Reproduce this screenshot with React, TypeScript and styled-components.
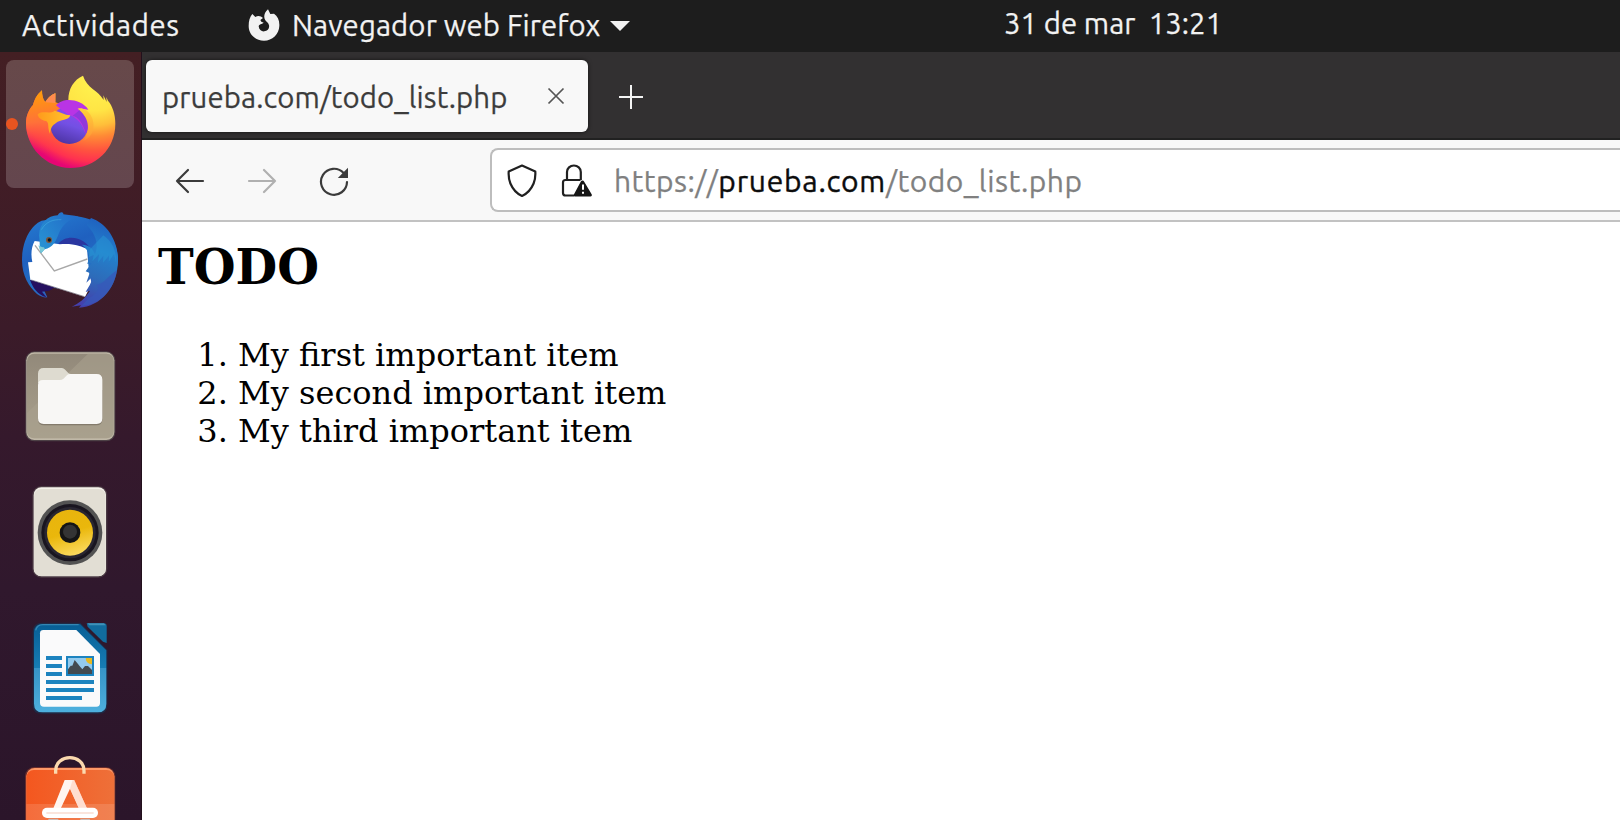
import React from 'react';
import styled, { createGlobalStyle } from 'styled-components';

const GlobalStyle = createGlobalStyle`
  * { box-sizing: border-box; }
  html, body { margin: 0; padding: 0; overflow: hidden; }
  svg { display: block; flex: none; }
`;

const uiFont = `Ubuntu, 'Noto Sans', 'Open Sans', sans-serif`;

const Desktop = styled.div`
  width: 1620px;
  height: 820px;
  display: flex;
  flex-direction: column;
  overflow: hidden;
  background: #fff;
  font-family: ${uiFont};
`;

const TopBar = styled.header`
  height: 52px;
  flex: none;
  display: grid;
  grid-template-columns: 248px 756px 1fr;
  background: #1d1d1d;
  color: #f2f2f2;
`;

const TopItem = styled.div<{ $pad?: number; $height?: number }>`
  display: flex;
  align-items: center;
  height: ${(p) => p.$height ?? 50}px;
  padding-left: ${(p) => p.$pad ?? 0}px;
  white-space: pre;
`;

const Label = styled.span<{ $size: number; $track: number }>`
  font-size: ${(p) => p.$size}px;
  letter-spacing: ${(p) => p.$track}px;
  line-height: 40px;
  white-space: pre;
  -webkit-text-stroke: 0.25px currentColor;
`;

const AppName = styled(Label)`
  margin: 0 10px 0 12px;
`;

const Workspace = styled.div`
  flex: 1;
  min-height: 0;
  display: flex;
`;

const Dock = styled.nav`
  width: 142px;
  flex: none;
  display: flex;
  flex-direction: column;
  gap: 8px;
  padding: 8px 6px 0;
  overflow: hidden;
  border-right: 1px solid #22101c;
  background: linear-gradient(180deg, #431f23 0, #411d26 17%, #3b1b29 36%, #35192c 50%, #30182d 70%, #2b152a 100%);
`;

const DockItem = styled.div<{ $active?: boolean }>`
  position: relative;
  width: 128px;
  height: 128px;
  flex: none;
  border-radius: 8px;
  background: ${(p) => (p.$active ? 'linear-gradient(180deg, #67494a, #64464e)' : 'transparent')};
`;

const RunningDot = styled.i`
  position: absolute;
  left: 0;
  top: 58px;
  width: 12px;
  height: 12px;
  border-radius: 50%;
  background: #e95420;
`;

const Browser = styled.main`
  flex: 1;
  min-width: 0;
  display: flex;
  flex-direction: column;
`;

const TabStrip = styled.div`
  height: 88px;
  flex: none;
  display: flex;
  padding: 8px 0 0 4px;
  background: #323031;
  border-bottom: 2px solid #212121;
`;

const Tab = styled.div`
  width: 442px;
  height: 72px;
  display: flex;
  align-items: center;
  justify-content: space-between;
  padding: 0 23px 0 16px;
  border-radius: 6px;
  background: #f8f8f8;
  color: #3c3c3c;
  box-shadow: 0 0 4px rgba(0, 0, 0, 0.6);
`;

const TabTitle = styled(Label)`
  padding-top: 4px;
`;

const NewTab = styled.div`
  display: flex;
  height: 72px;
  align-items: center;
  padding: 2px 0 0 30px;
`;

const Toolbar = styled.div`
  height: 82px;
  flex: none;
  display: flex;
  align-items: center;
  padding-left: 32px;
  border-bottom: 2px solid #c2c2c2;
  background: #f8f8f8;
`;

const NavButtons = styled.div`
  display: flex;
  gap: 40px;
  width: 316px;
  padding-top: 2px;
`;

const AddressBar = styled.div`
  height: 64px;
  flex: 1;
  display: flex;
  align-items: center;
  padding-left: 15px;
  border: 2px solid #bdbdbd;
  border-right: 0;
  border-radius: 8px 0 0 8px;
  background: #fff;
`;

const ShieldSlot = styled.div`
  width: 54px;
`;

const LockSlot = styled.div`
  width: 53px;
`;

const Url = styled(Label)`
  padding-top: 2px;
  color: #808080;
`;

const Domain = styled.span`
  color: #0c0c0c;
  letter-spacing: 0.75px;
  -webkit-text-stroke: 0.4px #0c0c0c;
`;

const Page = styled.article`
  flex: 1;
  padding: 17px 16px;
  background: #fff;
  color: #000;
`;

const Title = styled.h2`
  margin: 0 0 41px;
  font: bold 48px/56px 'DejaVu Serif', serif;
`;

const Items = styled.ol`
  margin: 0;
  padding-left: 80px;
  font-family: 'DejaVu Serif', serif;
  font-size: 32px;
  line-height: 38px;
`;

const FirefoxIcon = () => (
  <svg width="128" height="128" viewBox="18 180 384 384">
    <defs>
      <radialGradient id="ffBody" gradientUnits="userSpaceOnUse" cx="285" cy="240" r="272">
        <stop offset="0" stopColor="#fff44f" />
        <stop offset=".34" stopColor="#ffe545" />
        <stop offset=".5" stopColor="#ffbf3a" />
        <stop offset=".62" stopColor="#ff8b35" />
        <stop offset=".78" stopColor="#ff533f" />
        <stop offset=".9" stopColor="#ff3150" />
        <stop offset="1" stopColor="#e60674" />
      </radialGradient>
      <linearGradient id="ffLeft" gradientUnits="userSpaceOnUse" x1="125" y1="285" x2="145" y2="460">
        <stop offset="0" stopColor="#ff980e" />
        <stop offset=".45" stopColor="#ff7139" />
        <stop offset="1" stopColor="#ff3647" stopOpacity="0" />
      </linearGradient>
      <linearGradient id="ffGlobe" x1=".7" y1="0" x2=".35" y2="1">
        <stop offset="0" stopColor="#9646f2" />
        <stop offset=".5" stopColor="#7350e4" />
        <stop offset="1" stopColor="#4c34a4" />
      </linearGradient>
      <linearGradient id="ffRing" gradientUnits="userSpaceOnUse" x1="250" y1="330" x2="240" y2="450">
        <stop offset="0" stopColor="#ffcf38" />
        <stop offset=".6" stopColor="#ff9f38" />
        <stop offset="1" stopColor="#ff5a40" stopOpacity="0" />
      </linearGradient>
      <linearGradient id="ffFlame" x1="0" y1="0" x2="1" y2="0">
        <stop offset="0" stopColor="#ff9a1c" />
        <stop offset="1" stopColor="#ffc52c" />
      </linearGradient>
    </defs>
    <path fill="url(#ffBody)" d="M126 271 C108 286 103 302 99 315 C86 329 78 348 78 370 C78 442 137 504 211 504 C286 504 346 448 346 371 C346 342 337 317 324 302 L319 291 L320 306 L310 286 L311 300 C294 270 261 265 249 227 C222 239 205 265 205 300 L166 315 L166 280 C153 285 143 295 136 306 C128 298 126 285 126 271Z" />
    <path fill="url(#ffLeft)" d="M126 271 C108 286 103 302 99 315 C86 329 78 348 78 370 C78 410 96 444 126 470 L190 440 L205 345 L190 318 L166 306 L166 280 C153 285 143 295 136 306 C128 298 126 285 126 271Z" />
    <circle cx="208" cy="375" r="57" fill="url(#ffGlobe)" />
    <path fill="#b934e5" d="M168 316 C181 299 213 294 238 307 C251 313 260 321 265 329 L243 326 C260 343 270 372 256 401 C247 367 225 350 207 345 L185 330Z" />
    <path fill="#9137dc" d="M240 329 C265 349 273 374 257 402 C249 365 232 350 218 347Z" />
    <path fill="url(#ffFlame)" d="M113 343 C128 330 149 344 164 332 C178 335 194 345 211 346 C207 362 180 358 168 369 C157 377 153 380 150 401 C140 380 151 363 133 362 C124 359 115 355 113 343Z" />
    <path fill="url(#ffRing)" d="M233 326 C247 322 262 330 272 345 C289 374 281 411 249 424 C275 388 266 351 233 326Z" />
    <path fill="#ff8b50" d="M166 280 C151 286 142 297 136 307 L165 309Z" />
  </svg>
);

const ThunderbirdIcon = () => (
  <svg width="128" height="128" viewBox="18 18 384 384">
    <defs>
      <linearGradient id="tbBody" x1=".3" y1="0" x2=".8" y2="1">
        <stop offset="0" stopColor="#2376cd" />
        <stop offset=".35" stopColor="#1f60bf" />
        <stop offset=".65" stopColor="#2470c4" />
        <stop offset="1" stopColor="#3f3fa9" />
      </linearGradient>
      <linearGradient id="tbHead" x1="0" y1=".8" x2="1" y2="0">
        <stop offset="0" stopColor="#2792d3" />
        <stop offset="1" stopColor="#2268c8" />
      </linearGradient>
      <linearGradient id="tbWing" x1=".6" y1="0" x2=".4" y2="1">
        <stop offset="0" stopColor="#1f5fbf" />
        <stop offset=".35" stopColor="#2380cc" />
        <stop offset=".65" stopColor="#2d6cba" />
        <stop offset="1" stopColor="#443fac" />
      </linearGradient>
    </defs>
    <path fill="url(#tbBody)" d="M125 92 C91 106 66 155 66 211 C66 257 87 291 111 312 C122 320 132 323 142 322 L128 292 L250 300 L300 290 C336 268 354 240 354 211 C354 138 297 79 216 78Z" />
    <path fill="#25105f" d="M90 269 L165 291 L148 302 L126 305 L139 322 C113 313 98 294 90 269Z" />
    <path fill="#2a36a0" d="M174 163 C202 127 260 144 280 190 C256 167 219 161 174 163Z" />
    <path fill="#fff" d="M104 153 L180 163 C215 159 248 169 261 178 L267 245 L275 281 L255 321 L91 269 L84 217 L97 216 C92 195 94 170 104 153Z" />
    <path fill="none" stroke="#a8a8a8" strokeWidth="4" d="M105 166 L163 243 L262 207" />
    <path fill="none" stroke="#666170" strokeWidth="2" d="M94 270 L254 320" />
    <path fill="url(#tbWing)" d="M273 84 C326 102 355 160 354 211 C353 293 302 350 237 353 L243 346 L215 350 C235 342 258 323 270 302 L257 306 C268 288 278 273 274 263 L259 278 L269 249 L257 244 L275 219 L262 222 L268 200 C265 185 260 175 245 164 C272 165 280 180 285 193 C296 166 290 135 260 104Z" />
    <path fill="#2898d6" d="M310 136 L270 178 L266 202 L281 195 L277 214 L297 193 L293 220 L310 197 L309 218 L327 197 L326 216 L342 192 L348 218 C349 179 336 154 310 136Z" opacity=".5" />
    <path fill="#3857b9" d="M351 240 C326 256 312 282 288 285 C303 297 287 315 267 324 L244 348 C299 344 342 302 351 240Z" opacity=".7" />
    <path fill="url(#tbHead)" d="M117 136 C119 99 143 77 173 76 C179 64 191 65 190 73 C204 76 222 76 236 80 C204 88 187 106 177 129 C168 154 158 173 134 178 L123 190 C117 175 121 164 117 136Z" />
    <path fill="#78cad7" d="M115 166 C125 174 135 169 134 178 L123 190Z" />
    <circle cx="147" cy="150" r="9" fill="#7a543b" />
    <circle cx="148" cy="150" r="5" fill="#0c1720" />
    <path fill="none" stroke="#48b5e3" strokeWidth="3" d="M124 119 C139 94 160 88 184 89" opacity=".5" />
  </svg>
);

const FilesIcon = () => (
  <svg width="128" height="128" viewBox="18 426 384 384">
    <defs>
      <linearGradient id="flBack" x1="0" y1="0" x2="0" y2="1">
        <stop offset="0" stopColor="#92897a" />
        <stop offset="1" stopColor="#aaa18d" />
      </linearGradient>
    </defs>
    <rect x="76" y="484" width="270" height="270" rx="27" fill="#4d4146" />
    <rect x="79" y="487" width="264" height="263" rx="24" fill="#c0b8a7" />
    <rect x="81" y="491" width="260" height="254" rx="22" fill="url(#flBack)" />
    <path fill="#a8a08e" d="M264 491 H319 Q341 491 341 513 V723 Q341 745 319 745 H103 Q81 745 81 723 V669Z" opacity=".6" />
    <path fill="#71695b" d="M114 600 H307 V688 Q307 706 289 706 H132 Q114 706 114 688Z" opacity=".65" />
    <path fill="#dedbd0" d="M114 579 V551 Q114 534 131 534 H184 C199 534 200 552 213 552 V579Z" />
    <path fill="#f8f7f5" d="M114 585 Q114 570 129 570 H180 C196 570 196 552 210 552 H290 Q307 552 307 569 V685 Q307 702 290 702 H131 Q114 702 114 685Z" />
  </svg>
);

const SpeakerIcon = () => (
  <svg width="128" height="128" viewBox="18 -6 384 384">
    <defs>
      <linearGradient id="spCone" x1=".3" y1="0" x2=".6" y2="1">
        <stop offset="0" stopColor="#e8b40e" />
        <stop offset=".5" stopColor="#eab70b" />
        <stop offset="1" stopColor="#fbda5f" />
      </linearGradient>
    </defs>
    <rect x="97" y="48" width="225" height="275" rx="27" fill="#4a3943" />
    <rect x="101" y="52" width="217" height="267" rx="23" fill="#f3f1e9" />
    <rect x="102" y="57" width="215" height="261" rx="21" fill="#e2ded4" />
    <circle cx="210" cy="188" r="97" fill="#535353" />
    <circle cx="210" cy="188" r="86" fill="#19151f" />
    <circle cx="210" cy="188" r="77" fill="#292631" />
    <circle cx="210" cy="188" r="69" fill="url(#spCone)" />
    <circle cx="210" cy="188" r="31" fill="#151515" />
    <circle cx="210" cy="185" r="21" fill="#343434" />
  </svg>
);

const WriterIcon = () => (
  <svg width="128" height="128" viewBox="18 402 384 384">
    <defs>
      <linearGradient id="wrTop" x1="0" y1="0" x2="0" y2="1">
        <stop offset="0" stopColor="#075e95" />
        <stop offset="1" stopColor="#177db4" />
      </linearGradient>
      <linearGradient id="wrLow" x1="0" y1="0" x2="0" y2="1">
        <stop offset="0" stopColor="#3693c6" />
        <stop offset="1" stopColor="#4eb0de" />
      </linearGradient>
    </defs>
    <path fill="#1f2a46" d="M128 458 H241 L322 539 V704 Q322 731 295 731 H125 Q98 731 98 704 V485 Q98 458 128 458Z" />
    <path fill="url(#wrTop)" d="M128 462 H240 L319 541 V594 H102 V488 Q102 462 128 462Z" />
    <path fill="url(#wrLow)" d="M102 594 H319 V701 Q319 727 293 727 H128 Q102 727 102 701Z" />
    <path fill="none" stroke="#3486b3" strokeWidth="4" d="M107 481 Q111 464 129 464 H236" />
    <path fill="#fafafb" d="M130 480 H229 L300 552 V699 Q300 710 289 710 H132 Q120 710 120 699 V490 Q120 480 130 480Z" />
    <path fill="#116c9e" d="M260 460 H312 Q320 460 320 468 V519 L309 515 L263 470Z" />
    <path fill="#3f92b9" d="M262 460 H312 L317 466 H268Z" />
    <path fill="#1c83bf" d="M138 558 H186 V570 H138Z M138 582 H186 V594 H138Z M138 606 H186 V618 H138Z M138 630 H282 V642 H138Z M138 654 H282 V666 H138Z M138 678 H246 V690 H138Z M198 558 H282 V618 H198Z" />
    <path fill="#94caed" d="M204 564 H276 V612 H204Z" />
    <path fill="#e7b920" d="M257 564 H276 V583 Q258 581 257 564Z" />
    <path fill="#434a50" d="M204 612 V598 L212 587 H217 L224 570 L234 582 L238 587 L247 598 L255 588 L264 588 L276 600 V612Z" />
  </svg>
);

const SoftwareIcon = () => (
  <svg width="128" height="128" viewBox="18 810 384 384">
    <defs>
      <linearGradient id="swBag" x1="0" y1="0" x2="1" y2="0">
        <stop offset="0" stopColor="#f4571f" />
        <stop offset="1" stopColor="#ee7039" />
      </linearGradient>
    </defs>
    <rect x="75" y="891" width="271" height="270" rx="28" fill="#6b2d2b" />
    <rect x="79" y="894" width="264" height="265" rx="25" fill="#ff9967" />
    <rect x="79" y="900" width="264" height="258" rx="22" fill="url(#swBag)" />
    <rect x="79" y="1002" width="264" height="100" fill="#fff" opacity=".13" />
    <path fill="none" stroke="#fbd9ae" strokeWidth="10" d="M167 911 V902 C167 850 252 850 252 902 V911" />
    <path fill="#fff5f0" d="M194 930 H222 L263 1020 H239 L210 956 L180 1020 H158Z" />
    <path fill="#ffd6c5" d="M218 930 H223 L263 1020 H239 L210 956Z" opacity=".75" />
    <rect x="126" y="1013" width="168" height="31" rx="15" fill="#fff" />
    <path stroke="#f9ddd2" strokeWidth="5" d="M139 1029 H281" />
    <path fill="#c8bcb8" d="M146 1046 H175 V1053 H143Z M240 1046 H269 L272 1053 H243Z" />
  </svg>
);

const FirefoxGlyph = () => (
  <svg width="32" height="34" viewBox="12 12 96 102">
    <path
      fill="#f2f2f2"
      d="M25 27 L34 36 C42 31 51 33 57 39 L49 45 L52 50 L59 53 C53 58 45 57 44 64 C45 75 53 80 61 79 C71 78 77 70 75 61 C74 54 68 51 64 46 C58 37 60 23 72 13 L79 27 L90 26 C101 34 107 46 106 63 C105 88 85 107 60 107 C34 107 14 88 14 63 C14 48 17 36 25 27Z"
    />
  </svg>
);

const Caret = () => (
  <svg width="20" height="10" viewBox="0 0 20 10">
    <path d="M0 0H20L10 10Z" fill="#f2f2f2" />
  </svg>
);

const BackArrow = () => (
  <svg width="32" height="32" viewBox="0 0 32 32" fill="none" stroke="#3b3b3b" strokeWidth="2.2" strokeLinecap="round" strokeLinejoin="round">
    <path d="M29 16H3M14 5L3 16L14 27" />
  </svg>
);

const ForwardArrow = () => (
  <svg width="32" height="32" viewBox="0 0 32 32" fill="none" stroke="#b0b0b0" strokeWidth="2.2" strokeLinecap="round" strokeLinejoin="round">
    <path d="M3 16H29M18 5L29 16L18 27" />
  </svg>
);

const Reload = () => (
  <svg width="32" height="32" viewBox="0 0 32 32">
    <path fill="none" stroke="#3b3b3b" strokeWidth="2.2" strokeLinecap="round" d="M29 17A13 13 0 1 1 25.6 8" />
    <path fill="#3b3b3b" d="M30 2.7V13H19.8Z" />
  </svg>
);

const Shield = () => (
  <svg width="32" height="34" viewBox="0 0 32 34">
    <path fill="none" stroke="#202020" strokeWidth="2.2" strokeLinejoin="round" d="M15 2.5L28.3 8.5C28.6 13 28 17 26.6 20.5C24.5 25.5 20.5 30.5 15 33C9.5 30.5 5.5 25.5 3.4 20.5C2 17 1.4 13 1.7 8.5Z" />
  </svg>
);

const WarningLock = () => (
  <svg width="32" height="34" viewBox="0 0 32 34">
    <path fill="none" stroke="#202020" strokeWidth="2.2" d="M6 17V9A6.9 6.5 0 0 1 19.8 9V17M13 32.5H4.5Q2 32.5 2 30V19.5Q2 17 4.5 17H19.5" />
    <path fill="#161616" d="M21.5 17.5Q22.6 17.5 23.2 18.7L30.8 31.5Q31.3 33.6 29.5 33.6H13.6Q12 33 13 31.3L19.7 18.7Q20.3 17.5 21.5 17.5Z" />
    <path stroke="#fff" strokeWidth="2" d="M22 21.5V26.8M22 28.8V30.8" />
  </svg>
);

const CloseGlyph = () => (
  <svg width="18" height="18" viewBox="0 0 18 18">
    <path d="M1.5 1.5L16.5 16.5M16.5 1.5L1.5 16.5" stroke="#555" strokeWidth="1.7" />
  </svg>
);

const PlusGlyph = () => (
  <svg width="26" height="26" viewBox="0 0 26 26">
    <path d="M13 1V25M1 13H25" stroke="#f4f4f4" strokeWidth="2" />
  </svg>
);

const todos = ['My first important item', 'My second important item', 'My third important item'];

const launchers = [
  { name: 'firefox', Icon: FirefoxIcon, active: true },
  { name: 'thunderbird', Icon: ThunderbirdIcon },
  { name: 'files', Icon: FilesIcon },
  { name: 'rhythmbox', Icon: SpeakerIcon },
  { name: 'writer', Icon: WriterIcon },
  { name: 'software', Icon: SoftwareIcon },
];

export default function App() {
  return (
    <Desktop>
      <GlobalStyle />
      <TopBar>
        <TopItem $pad={22} $height={51}>
          <Label $size={29.33} $track={0.6}>Actividades</Label>
        </TopItem>
        <TopItem $height={51}>
          <FirefoxGlyph />
          <AppName $size={29.33} $track={0.12}>Navegador web Firefox</AppName>
          <Caret />
        </TopItem>
        <TopItem $height={48}>
          <Label $size={29.33} $track={0}>31 de mar  13:21</Label>
        </TopItem>
      </TopBar>
      <Workspace>
        <Dock>
          {launchers.map(({ name, Icon, active }) => (
            <DockItem key={name} $active={active}>
              <Icon />
              {active && <RunningDot />}
            </DockItem>
          ))}
        </Dock>
        <Browser>
          <TabStrip>
            <Tab>
              <TabTitle $size={29.33} $track={0.13}>prueba.com/todo_list.php</TabTitle>
              <CloseGlyph />
            </Tab>
            <NewTab>
              <PlusGlyph />
            </NewTab>
          </TabStrip>
          <Toolbar>
            <NavButtons>
              <BackArrow />
              <ForwardArrow />
              <Reload />
            </NavButtons>
            <AddressBar>
              <ShieldSlot><Shield /></ShieldSlot>
              <LockSlot><WarningLock /></LockSlot>
              <Url $size={30} $track={0.45}>
                https://<Domain>prueba.com</Domain>/todo_list.php
              </Url>
            </AddressBar>
          </Toolbar>
          <Page>
            <Title>TODO</Title>
            <Items>
              {todos.map((t) => (
                <li key={t}>{t}</li>
              ))}
            </Items>
          </Page>
        </Browser>
      </Workspace>
    </Desktop>
  );
}
